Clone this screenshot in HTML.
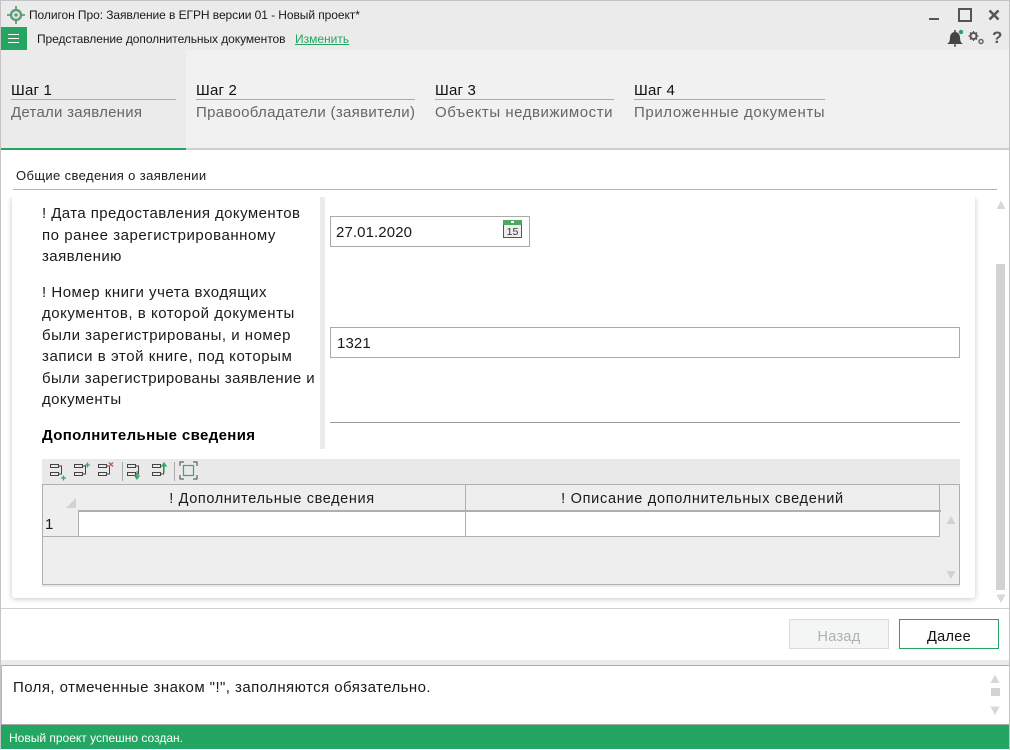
<!DOCTYPE html>
<html lang="ru"><head><meta charset="utf-8"><title>Полигон Про</title>
<style>
html,body{margin:0;padding:0;width:1010px;height:750px;overflow:hidden;background:#fff}
body{position:relative;font-family:"Liberation Sans",sans-serif;color:#1a1a1a}
.a{position:absolute}
.t{position:absolute;white-space:nowrap;line-height:20px;height:20px}
.l{font-size:15px;left:42px}
.s{font-size:15px;letter-spacing:.2px;color:#111;top:81px}
.d{font-size:15px;color:#666;top:103px}
</style></head><body>
<div class="a" style="left:0;top:0;width:1010px;height:50px;background:#ebebeb"></div>
<div class="a" style="left:0;top:50px;width:1010px;height:98px;background:#f1f1f1"></div>
<div class="a" style="left:1px;top:50px;width:185px;height:98px;background:#ebebeb"></div>
<div class="a" style="left:0;top:148px;width:1010px;height:2px;background:#cfcfcf"></div>
<div class="a" style="left:1px;top:148px;width:185px;height:2px;background:#23a661"></div>

<svg class="a" style="left:6px;top:5px" width="20" height="20" viewBox="0 0 20 20"><circle cx="10" cy="10" r="5" fill="none" stroke="#5f9d7a" stroke-width="2.400"/><circle cx="10" cy="10" r="1.800" fill="#5f9d7a"/><path d="M10 1v5M10 14v5M1 10h5M14 10h5" stroke="#5f9d7a" stroke-width="1.800"/></svg>
<div class="t" style="left:29px;top:5px;font-size:12px;letter-spacing:-.07px">Полигон Про: Заявление в ЕГРН версии 01 - Новый проект*</div>

<div class="a" style="left:1px;top:27px;width:26px;height:23px;background:#23a661"></div>
<div class="a" style="left:8px;top:34px;width:11px;height:1px;background:#fff"></div>
<div class="a" style="left:8px;top:38px;width:11px;height:1px;background:#fff"></div>
<div class="a" style="left:8px;top:42px;width:11px;height:1px;background:#fff"></div>
<div class="t" style="left:37px;top:29px;font-size:12px;letter-spacing:-.07px">Представление дополнительных документов</div>
<div class="t" style="left:295px;top:29px;font-size:12px;color:#23a661;text-decoration:underline">Изменить</div>

<div class="a" style="left:929px;top:18px;width:10px;height:2px;background:#555"></div>
<div class="a" style="left:958px;top:8px;width:10px;height:10px;border:2px solid #555"></div>
<svg class="a" style="left:988px;top:9px" width="12" height="12" viewBox="0 0 12 12"><path d="M1.500 1.500l9 9M10.500 1.500l-9 9" stroke="#555" stroke-width="2.600"/></svg>
<svg class="a" style="left:946px;top:29px" width="20" height="18" viewBox="0 0 20 18"><path d="M1 15c2.500-1.500 2.800-3 3-6.500C4.300 5 6 3 9 3s4.700 2 5 5.500c.2 3.500.5 5 3 6.500z" fill="#444"/><rect x="8" y="1" width="2" height="2" fill="#666"/><rect x="8" y="15.500" width="2" height="2" fill="#444"/><circle cx="15" cy="3" r="2.200" fill="#23a661"/></svg>
<svg class="a" style="left:968px;top:30px" width="17" height="16" viewBox="0 0 17 16"><circle cx="5.500" cy="6" r="3" fill="none" stroke="#555" stroke-width="2"/><path d="M5.500 1v2M5.500 9v2M.5 6h2M8.500 6h2M2 2.500l1.400 1.400M7.600 8.100l1.400 1.400M2 9.500l1.400-1.400M7.600 3.900L9 2.500" stroke="#555" stroke-width="1.300"/><circle cx="13" cy="11.500" r="2" fill="none" stroke="#666" stroke-width="1.500"/></svg>
<div class="t" style="left:992px;top:28px;font-size:17px;font-weight:bold;color:#555">?</div>

<div class="t s" style="left:11px">Шаг 1</div>
<div class="a" style="left:11px;top:99px;width:165px;height:1px;background:#aaa"></div>
<div class="t d" style="left:11px;letter-spacing:.25px">Детали заявления</div>
<div class="t s" style="left:196px">Шаг 2</div>
<div class="a" style="left:196px;top:99px;width:219px;height:1px;background:#aaa"></div>
<div class="t d" style="left:196px;letter-spacing:.31px">Правообладатели (заявители)</div>
<div class="t s" style="left:435px">Шаг 3</div>
<div class="a" style="left:435px;top:99px;width:179px;height:1px;background:#aaa"></div>
<div class="t d" style="left:435px;letter-spacing:.54px">Объекты недвижимости</div>
<div class="t s" style="left:634px">Шаг 4</div>
<div class="a" style="left:634px;top:99px;width:191px;height:1px;background:#aaa"></div>
<div class="t d" style="left:634px;letter-spacing:.6px">Приложенные документы</div>

<div class="t" style="left:16px;top:166px;font-size:13px;letter-spacing:.38px">Общие сведения о заявлении</div>
<div class="a" style="left:13px;top:189px;width:984px;height:1px;background:#b4b4b4"></div>

<div class="a" style="left:12px;top:197px;width:963px;height:401px;background:#fff;border-radius:0 0 3px 3px;box-shadow:0 1px 6px rgba(0,0,0,.22);clip-path:inset(0 -10px -10px -10px)"></div>
<div class="a" style="left:320px;top:197px;width:5px;height:252px;background:#ebebeb"></div>

<div class="t l" style="top:204px;letter-spacing:.43px">! Дата предоставления документов</div>
<div class="t l" style="top:226px;letter-spacing:.53px">по ранее зарегистрированному</div>
<div class="t l" style="top:247px;letter-spacing:.43px">заявлению</div>
<div class="t l" style="top:283px;letter-spacing:.51px">! Номер книги учета входящих</div>
<div class="t l" style="top:304px;letter-spacing:.53px">документов, в которой документы</div>
<div class="t l" style="top:326px;letter-spacing:.5px">были зарегистрированы, и номер</div>
<div class="t l" style="top:347px;letter-spacing:.57px">записи в этой книге, под которым</div>
<div class="t l" style="top:369px;letter-spacing:.42px">были зарегистрированы заявление и</div>
<div class="t l" style="top:390px;letter-spacing:.42px">документы</div>
<div class="t l" style="top:426px;font-weight:bold;color:#000;letter-spacing:.36px">Дополнительные сведения</div>

<div class="a" style="left:330px;top:216px;width:198px;height:29px;border:1px solid #aaa"></div>
<div class="t" style="left:336px;top:223px;font-size:15px;letter-spacing:.1px">27.01.2020</div>
<svg class="a" style="left:503px;top:220px" width="19" height="18" viewBox="0 0 19 18"><rect x=".5" y=".5" width="18" height="17" fill="#eee" stroke="#555"/><rect x="0" y="0" width="19" height="5" fill="#4ea862"/><rect x="8" y="1" width="3" height="2" fill="#fff"/><text x="9.500" y="15" font-family="Liberation Sans" font-size="10.500" text-anchor="middle" fill="#333">15</text></svg>

<div class="a" style="left:330px;top:327px;width:628px;height:29px;border:1px solid #aaa"></div>
<div class="t" style="left:337px;top:334px;font-size:15px;letter-spacing:.1px">1321</div>
<div class="a" style="left:330px;top:422px;width:630px;height:1px;background:#999"></div>

<div class="a" style="left:42px;top:459px;width:918px;height:128px;background:#e9e9e9"></div>
<svg class="a" style="left:48px;top:461px" width="155" height="21" viewBox="0 0 155 21" fill="none" stroke="#444" stroke-width="1">
<path d="M2.500 3.500h8v3h-8zM2.500 11.500h8v3h-8zM10.500 5h3v8h-3"/>
<path d="M13 17h5M15.500 14.500v5" stroke="#3aa66a" stroke-width="1.300"/>
<path d="M26.500 3.500h8v3h-8zM26.500 11.500h8v3h-8zM34.500 5h3v8h-3"/>
<path d="M37 4h5M39.500 1.500v5" stroke="#3aa66a" stroke-width="1.300"/>
<path d="M50.500 3.500h8v3h-8zM50.500 11.500h8v3h-8zM58.500 5h3v8h-3"/>
<path d="M61 1.500l4 4M65 1.500l-4 4" stroke="#c0604a" stroke-width="1.300"/>
<path d="M79.500 3.500h8v3h-8zM79.500 11.500h8v3h-8zM87.500 5h3v8h-3"/>
<path d="M89 10v5M87 15l2 3 2-3z" stroke="#3aa66a" fill="#3aa66a" stroke-width="1.300"/>
<path d="M104.500 3.500h8v3h-8zM104.500 11.500h8v3h-8zM112.500 5h3v8h-3"/>
<path d="M116 5v7M114 5l2-3 2 3z" stroke="#3aa66a" fill="#3aa66a" stroke-width="1.300"/>
</svg>
<div class="a" style="left:122px;top:462px;width:1px;height:19px;background:#aaa"></div>
<div class="a" style="left:174px;top:462px;width:1px;height:19px;background:#aaa"></div>
<svg class="a" style="left:179px;top:461px" width="19" height="19" viewBox="0 0 19 19" fill="none"><rect x="4.500" y="4.500" width="10" height="10" stroke="#3aa66a" stroke-width="1.200"/><path d="M1 5V1h4M14 1h4v4M18 14v4h-4M5 18H1v-4" stroke="#444"/></svg>

<div class="a" style="left:42px;top:484px;width:916px;height:99px;background:#eee;border:1px solid #aeaeb4"></div>
<div class="a" style="left:78px;top:511px;width:861px;height:25px;background:#fff"></div>
<div class="a" style="left:78px;top:510px;width:863px;height:2px;background:#aeaeb4"></div>
<div class="a" style="left:43px;top:536px;width:897px;height:1px;background:#aeaeb4"></div>
<div class="a" style="left:78px;top:511px;width:1px;height:25px;background:#aeaeb4"></div>
<div class="a" style="left:465px;top:485px;width:1px;height:51px;background:#aeaeb4"></div>
<div class="a" style="left:939px;top:485px;width:1px;height:52px;background:#aeaeb4"></div>
<svg class="a" style="left:66px;top:498px" width="10" height="10"><path d="M10 0v10H0z" fill="#d2d2d2"/></svg>
<div class="t" style="left:79px;top:489px;width:386px;text-align:center;font-size:14.500px;letter-spacing:.62px">! Дополнительные сведения</div>
<div class="t" style="left:466px;top:489px;width:473px;text-align:center;font-size:14.500px;letter-spacing:.71px">! Описание дополнительных сведений</div>
<div class="t" style="left:45px;top:515px;font-size:15px">1</div>
<svg class="a" style="left:946px;top:515px" width="10" height="10"><path d="M5 1l4.500 8H.5z" fill="#d2d2d2"/></svg>
<svg class="a" style="left:946px;top:570px" width="10" height="10"><path d="M.5 1h9L5 9z" fill="#d2d2d2"/></svg>

<svg class="a" style="left:996px;top:200px" width="10" height="10"><path d="M5 .5l4.500 8.500H.5z" fill="#d8d8d8"/></svg>
<div class="a" style="left:996px;top:264px;width:9px;height:326px;background:#d2d2d2"></div>
<svg class="a" style="left:996px;top:594px" width="10" height="10"><path d="M.5 .5h9L5 9z" fill="#d8d8d8"/></svg>

<div class="a" style="left:0;top:608px;width:1010px;height:1px;background:#cfcfcf"></div>
<div class="a" style="left:789px;top:619px;width:98px;height:28px;background:#f3f6f5;border:1px solid #dcdcdc"></div>
<div class="t" style="left:789px;top:627px;width:100px;text-align:center;font-size:14.500px;letter-spacing:.3px;color:#b0b0b0">Назад</div>
<div class="a" style="left:899px;top:619px;width:98px;height:28px;background:#fff;border:1px solid #23a661"></div>
<div class="t" style="left:899px;top:627px;width:100px;text-align:center;font-size:14.500px;letter-spacing:.3px;color:#111">Далее</div>

<div class="a" style="left:0;top:660px;width:1010px;height:5px;background:#ebebeb"></div>
<div class="a" style="left:1px;top:665px;width:1008px;height:1px;background:#a8a8a8"></div>
<div class="a" style="left:1px;top:665px;width:1px;height:60px;background:#b8b8b8"></div>
<div class="t" style="left:13px;top:678px;font-size:15px;letter-spacing:.44px">Поля, отмеченные знаком "!", заполняются обязательно.</div>
<svg class="a" style="left:990px;top:674px" width="10" height="10"><path d="M5 .5l4.500 8.500H.5z" fill="#d8d8d8"/></svg>
<div class="a" style="left:991px;top:688px;width:9px;height:8px;background:#d2d2d2"></div>
<svg class="a" style="left:990px;top:706px" width="10" height="10"><path d="M.5 .5h9L5 9z" fill="#d8d8d8"/></svg>

<div class="a" style="left:1px;top:724px;width:1008px;height:1px;background:#a8a8a8"></div>
<div class="a" style="left:1px;top:725px;width:1008px;height:24px;background:#23a661"></div>
<div class="t" style="left:9px;top:728px;font-size:12px;color:#fff">Новый проект успешно создан.</div>

<div class="a" style="left:0;top:0;width:1px;height:750px;background:#c4c4c4"></div>
<div class="a" style="left:1009px;top:0;width:1px;height:750px;background:#c4c4c4"></div>
<div class="a" style="left:0;top:0;width:1010px;height:1px;background:#c4c4c4"></div>
</body></html>
